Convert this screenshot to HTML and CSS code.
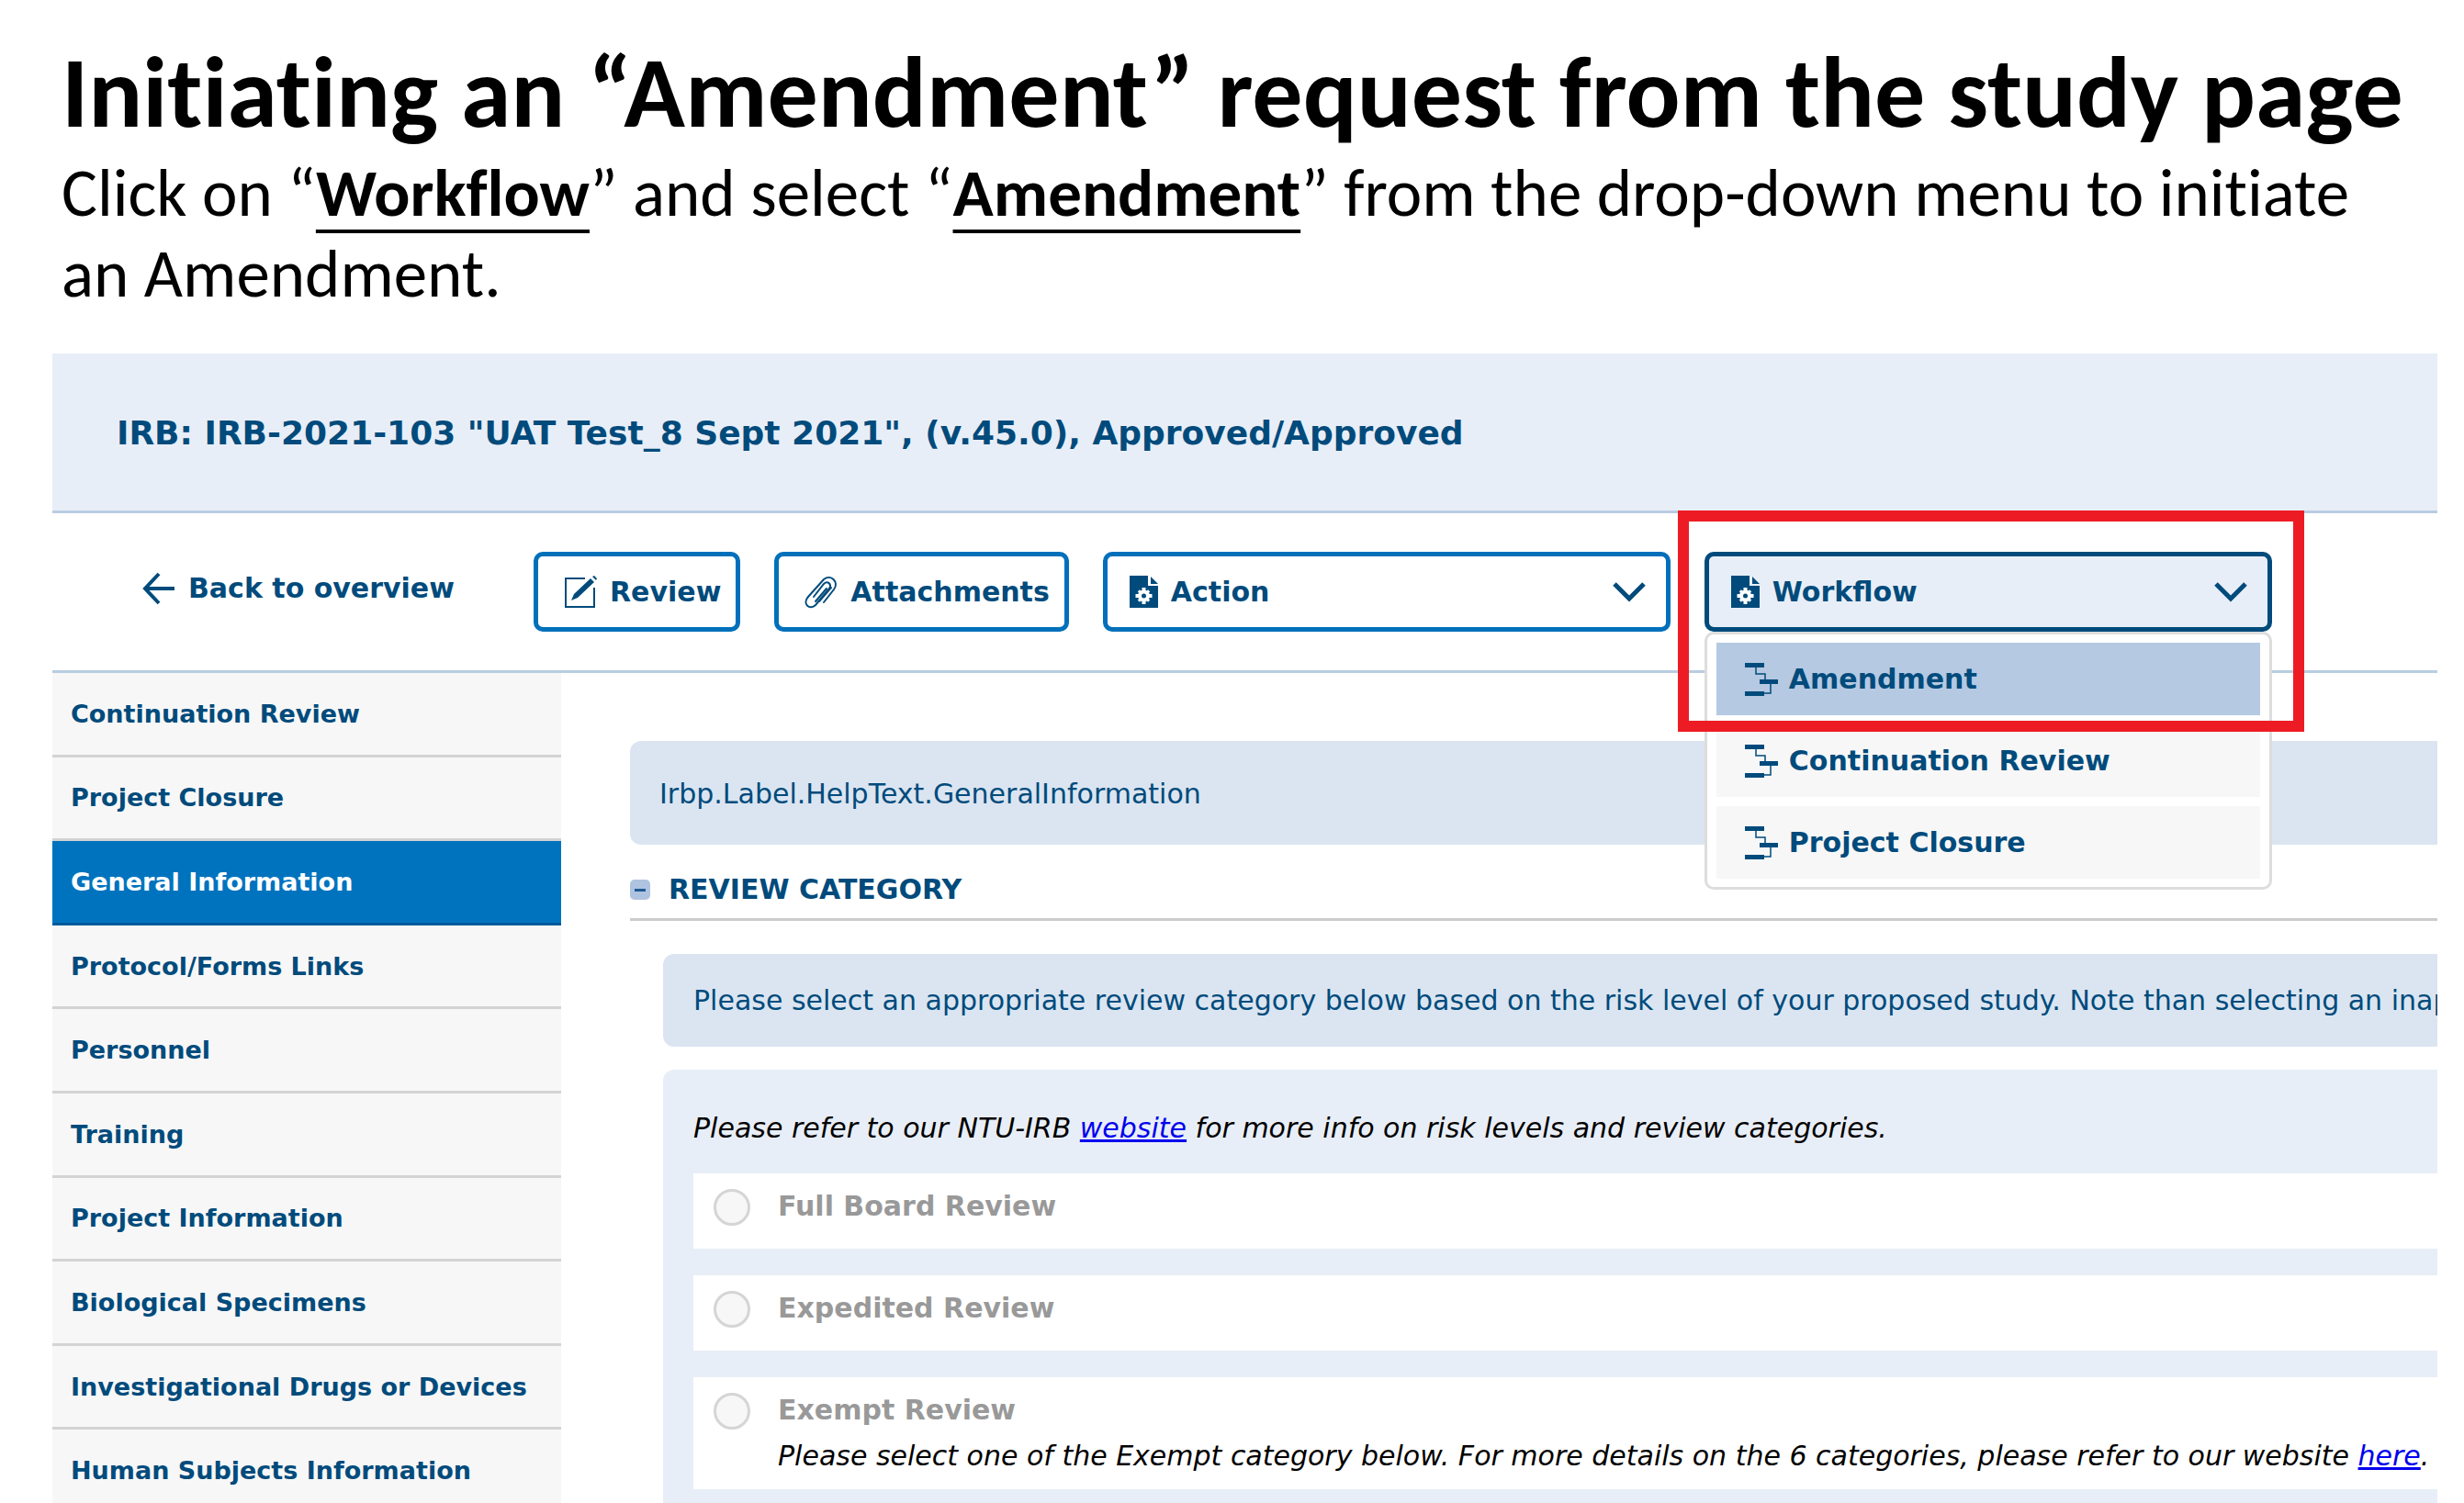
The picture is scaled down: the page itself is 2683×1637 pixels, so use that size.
FILE: index.html
```html
<!DOCTYPE html>
<html lang="en">

<head>
    <meta charset="UTF-8">
    <meta name="viewport" content="width=device-width, initial-scale=1.0">
    <title>Initiating an Amendment request</title>
    <link rel="stylesheet" href="styles.css">
</head>

<body>
    <!-- shared icons -->
    <svg class="sprite" aria-hidden="true">
        <symbol id="icon-file" viewBox="0 0 31 35">
            <path fill="currentColor" d="M0 0H20V11H31V35H0Z" />
            <path fill="currentColor" d="M23 1L31 9H23Z" />
            <g fill="#fff">
                <circle cx="15.500" cy="22" r="6.500" />
                <path d="M13.500 13h4v18h-4zM6.500 20h18v4h-18z" />
                <path d="M14 14h3v16h-3zM7.500 20.500h16v3h-16z" transform="rotate(45 15.500 22)" />
            </g>
            <circle cx="15.500" cy="22" r="2.500" fill="currentColor" />
        </symbol>
        <symbol id="icon-flow" viewBox="0 0 36 36">
            <path fill="currentColor" d="M0 0H21V5H0ZM16 18H36V23H16ZM0 31H21V36H0Z" />
            <path fill="none" stroke="currentColor" stroke-width="1.500" d="M12 5V12H22V18M28 23V33H21" />
        </symbol>
        <symbol id="icon-chevron" viewBox="0 0 36 22">
            <path fill="none" stroke="currentColor" stroke-width="5" d="M2 2L18 18L34 2" />
        </symbol>
    </svg>

    <div class="intro">
        <h1>Initiating an “Amendment” request from the study page</h1>
        <p>Click on “<b>Workflow</b>” and select “<b>Amendment</b>” from the drop-down menu to initiate an Amendment.</p>
    </div>

    <div class="app">
        <header class="app-header">
            <h2>IRB: IRB-2021-103 "UAT Test_8 Sept 2021", (v.45.0), Approved/Approved</h2>
        </header>

        <div class="toolbar">
            <a href="#" class="back">
                <svg width="36" height="36" viewBox="0 0 36 36" fill="none" stroke="currentColor" stroke-width="4">
                    <path d="M18 2L3 18L18 34M3 18H35" />
                </svg>
                Back to overview
            </a>
            <button type="button" class="btn">
                <svg width="36" height="36" viewBox="0 0 36 36">
                    <path fill="none" stroke="currentColor" stroke-width="2" d="M23 3H2V34H33V13" />
                    <path fill="currentColor" d="M29 3L33 7L15 24L8 27L11 20ZM31 1L33 0L36 3L35 5Z" />
                </svg>
                Review
            </button>
            <button type="button" class="btn">
                <svg width="36" height="36" viewBox="0 0 36 36" fill="none" stroke="currentColor" stroke-width="2" stroke-linecap="round">
                    <path d="M21 29L32 15C38 7 29 -2 21 4L4 23C-3 31 6 38 12 32L27 14C30 9 25 5 21 9L10 23M16 28L29 13M12 28L24 14" />
                </svg>
                Attachments
            </button>
            <button type="button" class="btn drop" aria-haspopup="menu">
                <svg width="31" height="35"><use href="#icon-file" /></svg>
                Action
                <svg class="chevron" width="36" height="22"><use href="#icon-chevron" /></svg>
            </button>
            <div class="workflow">
                <button type="button" class="btn drop open" aria-haspopup="menu" aria-expanded="true">
                    <svg width="31" height="35"><use href="#icon-file" /></svg>
                    Workflow
                    <svg class="chevron" width="36" height="22"><use href="#icon-chevron" /></svg>
                </button>
                <ul class="menu">
                    <li><a href="#" class="cur"><svg width="36" height="36"><use href="#icon-flow" /></svg>Amendment</a></li>
                    <li><a href="#"><svg width="36" height="36"><use href="#icon-flow" /></svg>Continuation Review</a></li>
                    <li><a href="#"><svg width="36" height="36"><use href="#icon-flow" /></svg>Project Closure</a></li>
                </ul>
                <div class="highlight"></div>
            </div>
        </div>

        <div class="content">
            <nav class="sidebar">
                <a href="#">Continuation Review</a>
                <a href="#">Project Closure</a>
                <a href="#" class="cur">General Information</a>
                <a href="#">Protocol/Forms Links</a>
                <a href="#">Personnel</a>
                <a href="#">Training</a>
                <a href="#">Project Information</a>
                <a href="#">Biological Specimens</a>
                <a href="#">Investigational Drugs or Devices</a>
                <a href="#">Human Subjects Information</a>
            </nav>

            <main class="main">
                <div class="help">Irbp.Label.HelpText.GeneralInformation</div>
                <div class="section-title">
                    <button type="button" class="toggle" aria-label="Collapse"></button>
                    <h3>REVIEW CATEGORY</h3>
                </div>
                <div class="section">
                    <div class="help note">Please select an appropriate review category below based on the risk level of your proposed study. Note than selecting an inap</div>
                    <div class="panel">
                        <p>Please refer to our NTU-IRB <a href="#">website</a> for more info on risk levels and review categories.</p>
                        <div class="option">
                            <input type="radio" name="category" id="full" disabled>
                            <label for="full">Full Board Review</label>
                        </div>
                        <div class="option">
                            <input type="radio" name="category" id="expedited" disabled>
                            <label for="expedited">Expedited Review</label>
                        </div>
                        <div class="option">
                            <input type="radio" name="category" id="exempt" disabled>
                            <div>
                                <label for="exempt">Exempt Review</label>
                                <p>Please select one of the Exempt category below. For more details on the 6 categories, please refer to our website <a href="#">here</a>.</p>
                            </div>
                        </div>
                    </div>
                </div>
            </main>
        </div>
    </div>
</body>

</html>
```
FILE: styles.css
```css
* {
    margin: 0;
    padding: 0;
    box-sizing: border-box;
}

body {
    height: 100vh;
    overflow: hidden;
    background-color: #fff;
    font-family: Verdana, "DejaVu Sans", sans-serif;
    font-size: 30px;
    color: #004b7c;
}

ul {
    list-style: none;
}

.sprite {
    position: absolute;
    width: 0;
    height: 0;
}

/* 标题 */
.intro {
    padding: 46px 60px 0 67px;
    font-family: Calibri, Carlito, Lato, sans-serif;
    font-variant-ligatures: none;
    color: #000;
}

.intro h1 {
    margin-bottom: 10px;
    font-size: 110px;
    line-height: 110px;
    white-space: nowrap;
}

.intro p {
    font-size: 73px;
    line-height: 88px;
}

.intro b {
    text-decoration: underline;
    text-decoration-thickness: 4px;
    text-underline-offset: 15px;
    text-decoration-skip-ink: none;
}

.app {
    margin: 43px 29px 0 57px;
}

.app-header {
    padding: 66px 70px 63px;
    background-color: #e8eef7;
    border-bottom: 3px solid #b9cde2;
}

.app-header h2 {
    font-size: 36px;
    line-height: 42px;
}

/* 工具栏 */
.toolbar {
    display: flex;
    gap: 37px;
    padding: 42px 0 42px 98px;
    border-bottom: 3px solid #b9cde2;
}

.back {
    display: flex;
    align-items: center;
    gap: 14px;
    width: 389px;
    height: 79px;
    font-weight: bold;
    color: #004b7c;
    text-decoration: none;
    white-space: nowrap;
}

.btn {
    display: flex;
    align-items: center;
    gap: 14px;
    height: 87px;
    padding: 0 16px 0 28px;
    border: 5px solid #0070ba;
    border-radius: 10px;
    background-color: #fff;
    font: inherit;
    font-weight: bold;
    color: #004b7c;
    white-space: nowrap;
}

.drop {
    width: 618px;
    padding: 0 22px 0 24px;
}

.chevron {
    margin-left: auto;
}

.open {
    border-color: #004b7c;
    background-color: #e8eef7;
}

.workflow {
    position: relative;
}

.menu {
    position: absolute;
    z-index: 1;
    top: 100%;
    left: 0;
    width: 100%;
    display: grid;
    gap: 10px;
    padding: 9px 10px;
    border: 3px solid #ddd;
    border-radius: 10px;
    background-color: #fff;
}

.menu a {
    display: flex;
    align-items: center;
    gap: 12px;
    height: 79px;
    padding-left: 31px;
    background-color: #f7f7f7;
    font-weight: bold;
    color: #004b7c;
    text-decoration: none;
}

.menu .cur {
    background-color: #b5c9e2;
}

/* 红框盖在下拉菜单上面 */
.highlight {
    position: absolute;
    z-index: 2;
    top: -45px;
    left: -29px;
    right: -35px;
    height: 241px;
    border: 12px solid #ed1c24;
}

.content {
    display: grid;
    grid-template-columns: 554px minmax(0, 1fr);
}

/* 左侧导航，行高平分 */
.sidebar {
    display: grid;
    grid-auto-rows: 1fr;
}

.sidebar a {
    display: flex;
    align-items: center;
    padding-left: 20px;
    border-bottom: 3px solid #d3d3d3;
    background-color: #f7f7f7;
    font-size: 27px;
    font-weight: bold;
    color: #004b7c;
    text-decoration: none;
}

.sidebar .cur {
    border-color: #005a9e;
    background-color: #0073be;
    color: #fff;
}

.main {
    padding: 74px 0 0 75px;
}

.help {
    padding: 39px 32px 37px;
    border-radius: 12px 0 0 12px;
    background-color: #dbe5f1;
    line-height: 37px;
    white-space: nowrap;
    overflow: hidden;
}

.section-title {
    display: flex;
    align-items: center;
    gap: 20px;
    padding: 31px 0 13px;
    border-bottom: 3px solid #ccc;
}

.section-title h3 {
    font-size: 30px;
    line-height: 36px;
}

.toggle {
    width: 22px;
    height: 22px;
    border: 0;
    border-radius: 5px;
    background: linear-gradient(#1f5a94, #1f5a94) center / 12px 3px no-repeat #afc3e0;
}

.section {
    padding: 36px 0 0 36px;
}

.note {
    padding: 32px 0 32px 33px;
}

.panel {
    margin-top: 25px;
    padding: 44px 0 27px 33px;
    border-radius: 12px 0 0 12px;
    background-color: #e8eef7;
}

.panel p {
    font-style: italic;
    line-height: 40px;
    color: #000;
    white-space: nowrap;
}

.panel p a {
    color: #0000ee;
    text-decoration-thickness: 3px;
}

.option {
    display: flex;
    gap: 30px;
    min-height: 82px;
    margin-top: 29px;
    padding: 17px 0 16px 22px;
    background-color: #fff;
}

.option input {
    appearance: none;
    flex: none;
    width: 40px;
    height: 40px;
    border: 3px solid #d5d5d5;
    border-radius: 50%;
    background-color: #f7f7f7;
}

.option label {
    display: block;
    line-height: 38px;
    font-weight: bold;
    color: #999;
}

.option p {
    margin-top: 11px;
}
```
